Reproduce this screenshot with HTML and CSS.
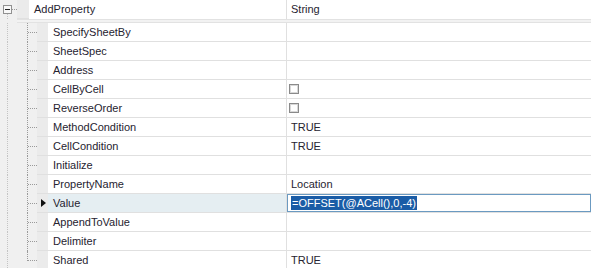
FILE: index.html
```html
<!DOCTYPE html>
<html lang="en">
<head>
  <meta charset="UTF-8">
  <title>Property grid</title>
  <link rel="stylesheet" href="styles.css">
</head>
<body>
  <div class="grid">
    <div class="row parent">
      <div class="gutter"><span class="toggle"></span></div>
      <div class="head"></div>
      <div class="name">AddProperty</div>
      <div class="value">String</div>
    </div>
    <div class="split"></div>

    <div class="row child"><div class="gutter"></div><div class="head"></div><div class="name">SpecifySheetBy</div><div class="value"></div></div>
    <div class="row child"><div class="gutter"></div><div class="head"></div><div class="name">SheetSpec</div><div class="value"></div></div>
    <div class="row child"><div class="gutter"></div><div class="head"></div><div class="name">Address</div><div class="value"></div></div>
    <div class="row child"><div class="gutter"></div><div class="head"></div><div class="name">CellByCell</div><div class="value"><span class="check"></span></div></div>
    <div class="row child"><div class="gutter"></div><div class="head"></div><div class="name">ReverseOrder</div><div class="value"><span class="check"></span></div></div>
    <div class="row child"><div class="gutter"></div><div class="head"></div><div class="name">MethodCondition</div><div class="value">TRUE</div></div>
    <div class="row child"><div class="gutter"></div><div class="head"></div><div class="name">CellCondition</div><div class="value">TRUE</div></div>
    <div class="row child"><div class="gutter"></div><div class="head"></div><div class="name">Initialize</div><div class="value"></div></div>
    <div class="row child"><div class="gutter"></div><div class="head"></div><div class="name">PropertyName</div><div class="value">Location</div></div>
    <div class="row child current">
      <div class="gutter"></div>
      <div class="head"><span class="arrow"></span></div>
      <div class="name">Value</div>
      <div class="value"><div class="editor"><span class="selected">=OFFSET(@ACell(),0,-4)</span></div></div>
    </div>
    <div class="row child"><div class="gutter"></div><div class="head"></div><div class="name">AppendToValue</div><div class="value"></div></div>
    <div class="row child"><div class="gutter"></div><div class="head"></div><div class="name">Delimiter</div><div class="value"></div></div>
    <div class="row child last"><div class="gutter"></div><div class="head"></div><div class="name">Shared</div><div class="value">TRUE</div></div>
  </div>
</body>
</html>
```

FILE: styles.css
```css
* {
  box-sizing: border-box;
  margin: 0;
  padding: 0;
}

body {
  font-family: "Liberation Sans", Arial, sans-serif;
  font-size: 11px;
  color: #262330;
  background: #ffffff;
  overflow: hidden;
}

.grid {
  width: 591px;
  background: #f0f0f0;
}

/* Wiersze */
.row {
  display: grid;
  height: 19px;
  line-height: 18px;
}

.parent {
  grid-template-columns: 17px 12px 258px 1fr;
}

.child {
  grid-template-columns: 37px 11px 239px 1fr;
}

.split {
  height: 4px;
  margin-left: 17px;
  border-top: 1px solid #e2e2e2;
  border-bottom: 1px solid #e2e2e2;
  background: #f2f2f2;
}

.gutter {
  position: relative;
  background: #f0f0f0;
}

.head {
  position: relative;
  background: #ebebeb;
  border-bottom: 1px solid #e0e0e0;
}

.name {
  background: #ffffff;
  padding-left: 5px;
  border-right: 1px solid #e0e0e0;
  border-bottom: 1px solid #e0e0e0;
  white-space: nowrap;
}

.parent .name {
  border-bottom: none;
}

.value {
  background: #ffffff;
  padding-left: 4px;
  border-bottom: 1px solid #e0e0e0;
  white-space: nowrap;
}

.parent .value {
  border-bottom: none;
}

/* Linie drzewa */
.gutter::before {
  content: "";
  position: absolute;
  left: 7px;
  top: 0;
  bottom: 0;
  border-left: 1px dotted #c4c4c4;
}

.parent .gutter::before {
  top: 14px;
}

.parent .gutter::after {
  content: "";
  position: absolute;
  left: 12px;
  top: 9px;
  width: 5px;
  border-top: 1px dotted #9a9a9a;
}

.child .gutter::after {
  content: "";
  position: absolute;
  left: 27px;
  top: 0;
  bottom: 0;
  width: 10px;
  border-left: 1px dotted #9a9a9a;
  background: linear-gradient(90deg, #9a9a9a 50%, transparent 50%) 0 9px / 2px 1px repeat-x;
}

.child.last .gutter::after {
  bottom: 9px;
  background-position: 0 100%;
}

.toggle {
  position: absolute;
  left: 3px;
  top: 5px;
  width: 9px;
  height: 9px;
  border: 1px solid #919191;
  background: #f8f8f8;
  z-index: 1;
}

.toggle::after {
  content: "";
  position: absolute;
  left: 1px;
  right: 1px;
  top: 3px;
  height: 1px;
  background: #222;
}

/* Zaznaczony wiersz */
.current .name {
  background: #e5eef2;
}

.arrow {
  position: absolute;
  left: 4px;
  top: 5px;
  border-top: 4px solid transparent;
  border-bottom: 4px solid transparent;
  border-left: 5px solid #111;
}

.current .value {
  padding: 0;
}

.editor {
  height: 18px;
  border: 1px solid #6b9ac1;
  padding-left: 3px;
  line-height: 15px;
}

.selected {
  display: inline-block;
  background: #1a5ca6;
  color: #ffffff;
  padding: 0 1px;
  line-height: 14px;
  margin-top: 1px;
}

/* Pola wyboru */
.check {
  display: inline-block;
  width: 10px;
  height: 10px;
  margin-top: 4px;
  margin-left: -2px;
  vertical-align: top;
  border: 1px solid #8a8a8a;
  box-shadow: inset 0 0 0 1px #d8d8d8;
  background: #ffffff;
}
```
